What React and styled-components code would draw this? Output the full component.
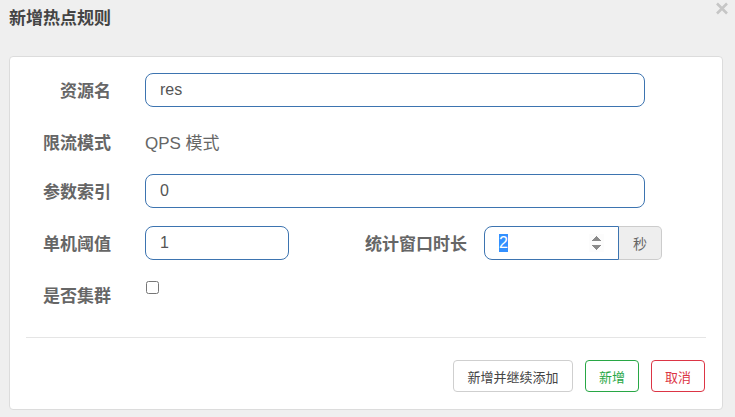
import React, { useEffect, useRef } from "react"
import styled, { createGlobalStyle } from "styled-components"

const GlobalStyle = createGlobalStyle`
  html, body {
    margin: 0;
    padding: 0;
    background: #efefef;
  }
  body {
    font-family: "Liberation Sans", "Noto Sans CJK SC", sans-serif;
    color: #555;
  }
`

const Dialog = styled.div`
  width: 735px;
  height: 417px;
  padding: 0 12px 0 9px;
  box-sizing: border-box;
`

const Header = styled.div`
  height: 56px;
  display: flex;
  justify-content: space-between;
  align-items: flex-start;
`

const Title = styled.h4`
  margin: 0;
  padding-top: 10px;
  font-size: 17px;
  line-height: 18px;
  font-weight: bold;
  color: #444;
`

const CloseButton = styled.button`
  margin: 2px -6px 0 0;
  padding: 0;
  border: none;
  background: transparent;
  cursor: pointer;
  width: 14px;
  height: 13px;
  display: flex;
`

const Panel = styled.div`
  background: #fff;
  border: 1px solid #dcdcdc;
  border-radius: 4px;
  padding: 16px 16px 17px 16px;
`

const Row = styled.div`
  display: flex;
  align-items: flex-start;
  min-height: ${({ h }) => h || 34}px;
  margin-bottom: ${({ last }) => (last ? 0 : 18)}px;
`

const Label = styled.label`
  width: ${({ w }) => w || 85}px;
  flex: none;
  text-align: right;
  padding-top: 10px;
  font-size: 17px;
  line-height: 18px;
  font-weight: bold;
  color: #666;
  margin-right: ${({ gap }) => (gap === undefined ? 34 : gap)}px;
`

const TextInput = styled.input`
  box-sizing: border-box;
  width: ${({ w }) => w}px;
  height: 34px;
  padding: 0 14px;
  border: 1px solid #3d74b0;
  border-radius: ${({ joined }) => (joined ? "8px 0 0 8px" : "8px")};
  font-family: "Liberation Sans", "Noto Sans CJK SC", sans-serif;
  font-size: 16px;
  color: #555;
  background: #fff;
  outline: none;
  &::selection {
    background: #3390ff;
    color: #fff;
  }
`

const StaticText = styled.div`
  padding-top: 9px;
  font-size: 17px;
  line-height: 20px;
  color: #666;
`

const InputGroup = styled.div`
  display: flex;
  width: 178px;
`

const Addon = styled.span`
  box-sizing: border-box;
  width: 43px;
  height: 34px;
  display: flex;
  align-items: center;
  justify-content: center;
  background: #eee;
  border: 1px solid #ccc;
  border-left: none;
  border-radius: 0 5px 5px 0;
  font-size: 14px;
  color: #666;
`

const Checkbox = styled.input`
  margin: 3px 0 0 1px;
  width: 13px;
  height: 13px;
`

const Divider = styled.hr`
  border: none;
  border-top: 1px solid #e5e5e5;
  margin: 25px 0 22px 0;
`

const Footer = styled.div`
  display: flex;
  justify-content: flex-end;
  gap: 12px;
  padding-right: 1px;
`

const tones = {
  plain: { border: "#cfcfcf", text: "#444" },
  ok: { border: "#28a745", text: "#28a745" },
  cancel: { border: "#dc3545", text: "#dc3545" },
}

const Button = styled.button`
  box-sizing: border-box;
  width: ${({ w }) => w || 54}px;
  height: 32px;
  padding: 0;
  background: #fff;
  border: 1px solid ${({ tone }) => tones[tone].border};
  color: ${({ tone }) => tones[tone].text};
  border-radius: 4px;
  font-family: "Liberation Sans", "Noto Sans CJK SC", sans-serif;
  font-size: 13px;
  cursor: pointer;
`

export default function App() {
  const windowRef = useRef(null)

  useEffect(() => {
    const el = windowRef.current
    if (el) {
      el.focus()
      el.select()
    }
  }, [])

  return (
    <Dialog>
      <GlobalStyle />
      <Header>
        <Title>新增热点规则</Title>
        <CloseButton aria-label="close">
          <svg width="14" height="13" viewBox="0 0 14 13">
            <path d="M2 1.5 L12 11.5 M12 1.5 L2 11.5" stroke="#c6c6c6" strokeWidth="2.6" />
          </svg>
        </CloseButton>
      </Header>
      <Panel>
        <Row>
          <Label>资源名</Label>
          <TextInput w={500} defaultValue="res" />
        </Row>
        <Row h={31}>
          <Label>限流模式</Label>
          <StaticText>QPS 模式</StaticText>
        </Row>
        <Row>
          <Label>参数索引</Label>
          <TextInput w={500} defaultValue="0" />
        </Row>
        <Row>
          <Label>单机阈值</Label>
          <TextInput w={144} defaultValue="1" />
          <Label w={178} gap={17}>统计窗口时长</Label>
          <InputGroup>
            <TextInput ref={windowRef} type="number" w={135} joined defaultValue="2" />
            <Addon>秒</Addon>
          </InputGroup>
        </Row>
        <Row last>
          <Label>是否集群</Label>
          <Checkbox type="checkbox" />
        </Row>
        <Divider />
        <Footer>
          <Button tone="plain" w={120}>新增并继续添加</Button>
          <Button tone="ok">新增</Button>
          <Button tone="cancel">取消</Button>
        </Footer>
      </Panel>
    </Dialog>
  )
}
